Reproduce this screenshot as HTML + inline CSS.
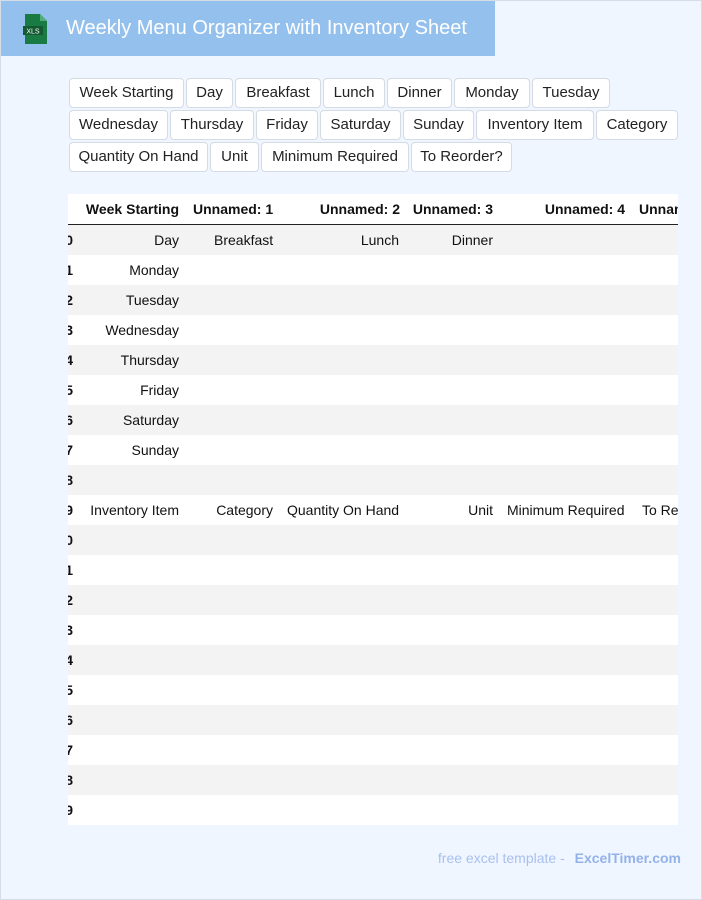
<!DOCTYPE html>
<html><head><meta charset="utf-8"><style>
*{margin:0;padding:0;box-sizing:border-box}
body{width:702px;height:900px;background:#eff6ff;position:relative;overflow:hidden;font-family:"Liberation Sans",Arial,sans-serif}
.frame{position:absolute;left:0;top:0;width:702px;height:900px;border:1px solid #d6dde6;pointer-events:none}
.title{position:absolute;left:0;top:0;width:495px;height:56px;background:#93c0ec;color:#fff;font-size:20px;line-height:56px;padding-left:66px}
.btn{position:absolute;height:30px;background:#fff;border:1px solid #d4dbe3;border-radius:4px;font-size:15px;line-height:28px;text-align:center;color:#222}
.tbl{position:absolute;left:68px;top:194px;width:610px;height:631px;overflow:hidden;background:#fff}
.row{position:absolute;left:0;width:610px;height:30px;font-size:14px;line-height:30px;color:#111}
.g{background:#f3f3f3}
.c{position:absolute;top:0;white-space:nowrap}
.r{text-align:right}
.hd{font-weight:bold;height:31px;border-bottom:1px solid #222}
.ix{font-weight:bold;position:absolute;right:605px;top:0}
.foot{position:absolute;right:21px;top:850px;font-size:14px;color:#a9c0ee}
.foot b{color:#94b2ea;margin-left:6px}
</style></head><body>
<div class="title">Weekly Menu Organizer with Inventory Sheet</div>
<svg style="position:absolute;left:20px;top:13px" width="32" height="32" viewBox="0 0 32 32">
<path d="M5 1h15l7 7v23H5z" fill="#1a7a43"/><path d="M20 1v7h7z" fill="#4fae76"/>
<rect x="3" y="13" width="20" height="9" fill="#145a31"/>
<text x="13" y="20.5" font-size="7" fill="#fff" text-anchor="middle" font-family="Liberation Sans">XLS</text></svg>

<div class="btn" style="left:69px;top:78px;width:115px">Week Starting</div>
<div class="btn" style="left:186px;top:78px;width:47px">Day</div>
<div class="btn" style="left:235px;top:78px;width:86px">Breakfast</div>
<div class="btn" style="left:323px;top:78px;width:62px">Lunch</div>
<div class="btn" style="left:387px;top:78px;width:65px">Dinner</div>
<div class="btn" style="left:454px;top:78px;width:76px">Monday</div>
<div class="btn" style="left:532px;top:78px;width:78px">Tuesday</div>
<div class="btn" style="left:69px;top:110px;width:99px">Wednesday</div>
<div class="btn" style="left:170px;top:110px;width:84px">Thursday</div>
<div class="btn" style="left:256px;top:110px;width:62px">Friday</div>
<div class="btn" style="left:320px;top:110px;width:81px">Saturday</div>
<div class="btn" style="left:403px;top:110px;width:71px">Sunday</div>
<div class="btn" style="left:476px;top:110px;width:118px">Inventory Item</div>
<div class="btn" style="left:596px;top:110px;width:82px">Category</div>
<div class="btn" style="left:69px;top:142px;width:139px">Quantity On Hand</div>
<div class="btn" style="left:210px;top:142px;width:49px">Unit</div>
<div class="btn" style="left:261px;top:142px;width:148px">Minimum Required</div>
<div class="btn" style="left:411px;top:142px;width:101px">To Reorder?</div>

<div class="tbl">
<div class="row hd" style="top:0">
<span class="c r" style="right:499px">Week Starting</span>
<span class="c" style="left:125px">Unnamed: 1</span>
<span class="c r" style="right:278px">Unnamed: 2</span>
<span class="c r" style="right:185px">Unnamed: 3</span>
<span class="c r" style="right:53px">Unnamed: 4</span>
<span class="c" style="left:571px">Unnamed: 5</span>
</div>
<div class="row g" style="top:31px"><span class="ix">0</span><span class="c r" style="right:499px">Day</span><span class="c" style="left:146px">Breakfast</span><span class="c r" style="right:279px">Lunch</span><span class="c r" style="right:185px">Dinner</span></div>
<div class="row" style="top:61px"><span class="ix">1</span><span class="c r" style="right:499px">Monday</span></div>
<div class="row g" style="top:91px"><span class="ix">2</span><span class="c r" style="right:499px">Tuesday</span></div>
<div class="row" style="top:121px"><span class="ix">3</span><span class="c r" style="right:499px">Wednesday</span></div>
<div class="row g" style="top:151px"><span class="ix">4</span><span class="c r" style="right:499px">Thursday</span></div>
<div class="row" style="top:181px"><span class="ix">5</span><span class="c r" style="right:499px">Friday</span></div>
<div class="row g" style="top:211px"><span class="ix">6</span><span class="c r" style="right:499px">Saturday</span></div>
<div class="row" style="top:241px"><span class="ix">7</span><span class="c r" style="right:499px">Sunday</span></div>
<div class="row g" style="top:271px"><span class="ix">8</span></div>
<div class="row" style="top:301px"><span class="ix">9</span><span class="c r" style="right:499px">Inventory Item</span><span class="c r" style="right:405px">Category</span><span class="c" style="left:219px">Quantity On Hand</span><span class="c r" style="right:185px">Unit</span><span class="c" style="left:439px">Minimum Required</span><span class="c" style="left:574px">To Reorder?</span></div>
<div class="row g" style="top:331px"><span class="ix">0</span></div>
<div class="row" style="top:361px"><span class="ix">1</span></div>
<div class="row g" style="top:391px"><span class="ix">2</span></div>
<div class="row" style="top:421px"><span class="ix">3</span></div>
<div class="row g" style="top:451px"><span class="ix">4</span></div>
<div class="row" style="top:481px"><span class="ix">5</span></div>
<div class="row g" style="top:511px"><span class="ix">6</span></div>
<div class="row" style="top:541px"><span class="ix">7</span></div>
<div class="row g" style="top:571px"><span class="ix">8</span></div>
<div class="row" style="top:601px"><span class="ix">9</span></div>
</div>
<div class="foot">free excel template - <b>ExcelTimer.com</b></div>
<div class="frame"></div>
</body></html>
